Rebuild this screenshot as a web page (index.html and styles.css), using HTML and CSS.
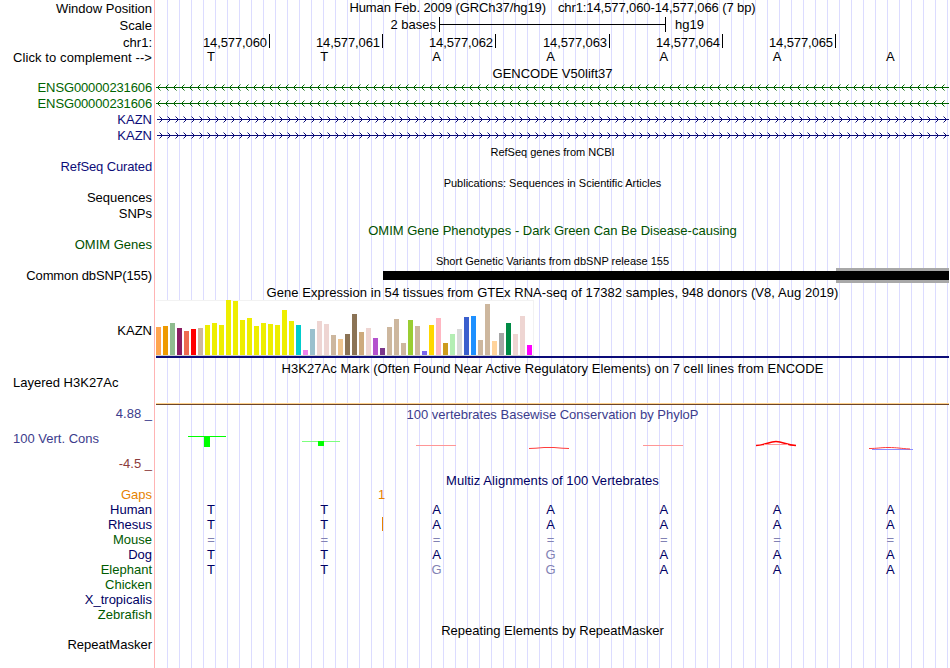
FILE: index.html
```html
<!DOCTYPE html>
<html lang="en">
<head>
  <meta charset="UTF-8">
  <title>chr1:14,577,060-14,577,066</title>
  <link rel="stylesheet" href="styles.css">
</head>
<body>
  <div class="browser">

    <div class="group ruler lower">
      <div class="row"><div class="label">Window Position</div><div class="track position"><span class="assembly">Human Feb. 2009 (GRCh37/hg19)</span><span>chr1:14,577,060-14,577,066 (7 bp)</span></div></div>
      <div class="row scale-row"><div class="label">Scale</div><div class="track scale"><span class="bases">2 bases</span><span class="scale-bar"></span><span>hg19</span></div></div>
      <div class="row coord-row"><div class="label">chr1:</div><div class="track coords"><span>14,577,060</span><span>14,577,061</span><span>14,577,062</span><span>14,577,063</span><span>14,577,064</span><span>14,577,065</span></div></div>
      <div class="row base-row"><div class="label loose">Click to complement --&gt;</div><div class="track seq"><span>T</span><span>T</span><span>A</span><span>A</span><span>A</span><span>A</span><span>A</span></div></div>
    </div>

    <div class="group lower">
      <h2>GENCODE V50lift37</h2>
      <div class="row green"><div class="label tight">ENSG00000231606</div><div class="track"><svg class="gene" width="793" height="16"><defs><pattern id="minus" width="8" height="16" patternUnits="userSpaceOnUse"><path d="M4.5 5.5L1.5 8.5L4.5 11.5"/></pattern></defs><rect width="793" height="16" fill="url(#minus)"/><path d="M0 8.5H793"/></svg></div></div>
      <div class="row green"><div class="label tight">ENSG00000231606</div><div class="track"><svg class="gene" width="793" height="16"><rect width="793" height="16" fill="url(#minus)"/><path d="M0 8.5H793"/></svg></div></div>
      <div class="row blue"><div class="label">KAZN</div><div class="track"><svg class="gene" width="793" height="16"><defs><pattern id="plus" width="8" height="16" patternUnits="userSpaceOnUse"><path d="M3.5 5.5L6.5 8.5L3.5 11.5"/></pattern></defs><rect width="793" height="16" fill="url(#plus)"/><path d="M1 8.5H793"/></svg></div></div>
      <div class="row blue"><div class="label">KAZN</div><div class="track"><svg class="gene" width="793" height="16"><rect width="793" height="16" fill="url(#plus)"/><path d="M1 8.5H793"/></svg></div></div>
    </div>

    <div class="group lower">
      <h2 class="small">RefSeq genes from NCBI</h2>
      <div class="row blue"><div class="label tight">RefSeq Curated</div></div>
    </div>

    <div class="group lower">
      <h2 class="small">Publications: Sequences in Scientific Articles</h2>
      <div class="row"><div class="label">Sequences</div></div>
      <div class="row"><div class="label">SNPs</div></div>
    </div>

    <div class="group lower">
      <h2 class="omim">OMIM Gene Phenotypes - Dark Green Can Be Disease-causing</h2>
      <div class="row omim"><div class="label">OMIM Genes</div></div>
    </div>

    <div class="group lower">
      <h2 class="small">Short Genetic Variants from dbSNP release 155</h2>
      <div class="row"><div class="label tight">Common dbSNP(155)</div><div class="track snps"><span class="snp"></span><span class="snp overlap"></span></div></div>
    </div>

    <div class="group lower">
      <h2 class="wide">Gene Expression in 54 tissues from GTEx RNA-seq of 17382 samples, 948 donors (V8, Aug 2019)</h2>
      <div class="row gtex-row"><div class="label">KAZN</div><div class="track gtex"><div class="bars" id="bars"></div></div></div>
    </div>

    <div class="group">
      <h2 class="wide">H3K27Ac Mark (Often Found Near Active Regulatory Elements) on 7 cell lines from ENCODE</h2>
      <div class="row h3k-row"><div class="label left">Layered H3K27Ac</div><div class="track h3k"></div></div>
    </div>

    <div class="row cons-row">
      <div class="label cons-label"><span class="max">4.88 _</span><span class="name">100 Vert. Cons</span><span class="min">-4.5 _</span></div>
      <div class="track cons">
        <h2>100 vertebrates Basewise Conservation by PhyloP</h2>
        <svg class="wiggle" width="793" height="49">
          <path class="pos" d="M32 13.5H70"/>
          <rect class="pos-box" x="48" y="13" width="6" height="11"/>
          <path class="pos thin" d="M146 18.5H184"/>
          <rect class="pos-box" x="162" y="18" width="6" height="5"/>
          <path class="neg faint" d="M260 22.5H300M487 22.5H527"/>
          <path class="neg" d="M373 25.5L380 25.2L388 24.5H398L406 25.2L413 25.5"/>
          <path class="neg strong" d="M600 22.5C610 22 613 18.5 620 18.5C627 18.5 630 22 640 22.5"/>
          <path class="neg faint" d="M608 21.5H632"/>
          <path class="under" d="M716 26.5H757"/>
          <path class="neg" d="M713 25.5C722 25.5 724 24.5 732 24.5C742 24.5 744 25.5 754 26"/>
        </svg>
      </div>
    </div>

    <div class="group multiz">
      <h2 class="wide">Multiz Alignments of 100 Vertebrates</h2>
      <div class="row gaps"><div class="label">Gaps</div><div class="track gap-count">1</div></div>
      <div class="row"><div class="label">Human</div><div class="track seq"><span>T</span><span>T</span><span>A</span><span>A</span><span>A</span><span>A</span><span>A</span></div></div>
      <div class="row"><div class="label">Rhesus</div><div class="track seq insert"><span>T</span><span>T</span><span>A</span><span>A</span><span>A</span><span>A</span><span>A</span></div></div>
      <div class="row alt"><div class="label">Mouse</div><div class="track seq gap"><span>=</span><span>=</span><span>=</span><span>=</span><span>=</span><span>=</span><span>=</span></div></div>
      <div class="row"><div class="label">Dog</div><div class="track seq"><span>T</span><span>T</span><span>A</span><span class="diff">G</span><span>A</span><span>A</span><span>A</span></div></div>
      <div class="row alt"><div class="label">Elephant</div><div class="track seq"><span>T</span><span>T</span><span class="diff">G</span><span class="diff">G</span><span>A</span><span>A</span><span>A</span></div></div>
      <div class="row alt"><div class="label">Chicken</div></div>
      <div class="row"><div class="label">X_tropicalis</div></div>
      <div class="row alt"><div class="label">Zebrafish</div></div>
    </div>

    <div class="group">
      <h2>Repeating Elements by RepeatMasker</h2>
      <div class="row"><div class="label">RepeatMasker</div></div>
    </div>

  </div>

  <script>
    // median expression per tissue: [bar height, tissue color]
    const tissues = [
      [28, '#ffa54f'], [29, '#ee9a00'], [32, '#8fbc8f'], [27, '#8b1c62'], [24, '#ee6a50'], [26, '#ff0000'],
      [27, '#cdb79e'], [30, '#eeee00'], [32, '#eeee00'], [30, '#eeee00'], [55, '#eeee00'], [54, '#eeee00'],
      [35, '#eeee00'], [37, '#eeee00'], [29, '#eeee00'], [32, '#eeee00'], [31, '#eeee00'], [30, '#eeee00'],
      [45, '#eeee00'], [34, '#eeee00'], [30, '#00cdcd'], [5, '#ee82ee'], [26, '#9ac0cd'], [34, '#eed5d2'],
      [31, '#eed5d2'], [20, '#cdb79e'], [16, '#eec591'], [21, '#8b7355'], [41, '#8b7355'], [23, '#cdaa7d'],
      [27, '#eed5d2'], [17, '#b452cd'], [7, '#7a378b'], [28, '#cdb79e'], [36, '#cdb79e'], [12, '#cdb79e'],
      [35, '#9acd32'], [29, '#cdb79e'], [4, '#7a67ee'], [30, '#ffd700'], [37, '#ffb6c1'], [12, '#cd9b1d'],
      [21, '#b4eeb4'], [26, '#d9d9d9'], [38, '#3a5fcd'], [39, '#1e90ff'], [15, '#cdb79e'], [51, '#cdb79e'],
      [14, '#ffd39b'], [22, '#a6a6a6'], [32, '#008b45'], [21, '#eed5d2'], [39, '#eed5d2'], [10, '#ff00ff']
    ];
    const bars = document.getElementById('bars');
    tissues.forEach(([height, color]) => {
      const bar = document.createElement('span');
      bar.style.height = height + 'px';
      bar.style.background = color;
      bars.appendChild(bar);
    });
  </script>
</body>
</html>
```
FILE: styles.css
```css
body {
  margin: 0;
  background: #fff;
  font-family: "Liberation Sans", Arial, sans-serif;
  font-size: 13px;
  color: #000;
}
.browser {
  width: 949px;
  height: 668px;
  overflow: hidden;
  /* red edge of the label column, then a guide line every 12px */
  background:
    linear-gradient(#ffb4b4, #ffb4b4) 154px 0 / 1px 100% no-repeat,
    linear-gradient(#fff, #fff) 0 0 / 156px 100% no-repeat,
    repeating-linear-gradient(to right, transparent 0 11px, #dcdcff 11px 12px) 156px 0;
}
h2 {
  margin: 0 0 0 156px;
  height: 15px;
  padding-top: 1px;
  box-sizing: border-box;
  line-height: 15px;
  font-size: 13px;
  font-weight: normal;
  text-align: center;
  white-space: nowrap;
}
h2.small {
  font-size: 11px;
}
h2.wide {
  letter-spacing: 0.05px;
}
.row {
  display: flex;
  height: 16px;
  line-height: 16px;
}
.label {
  width: 152px;
  margin-right: 4px;
  flex: none;
  text-align: right;
  white-space: nowrap;
}
.label.tight { letter-spacing: -0.13px; }
.label.loose { letter-spacing: 0.09px; }
.label.left {
  box-sizing: border-box;
  padding-left: 13px;
  text-align: left;
  line-height: 15px;
}
.lower h2 {
  padding-top: 2px;
}
.lower .label {
  padding-top: 1px;
}
.track {
  width: 793px;
  flex: none;
}
.green { color: #006400; }
.blue { color: #0c0c78; }
.omim { color: #005000; }

/* ruler */
.position {
  display: flex;
  justify-content: center;
  gap: 12px;
  letter-spacing: -0.1px;
}
.scale-row, .coord-row {
  height: 17px;
  line-height: 17px;
}
.scale {
  display: flex;
  align-items: center;
}
.bases {
  width: 280px;
  text-align: right;
}
.scale-bar {
  width: 225px;
  height: 15px;
  margin: 0 9px 0 3px;
  border: solid #000;
  border-width: 0 1px;
  background: linear-gradient(#000, #000) 0 7px / 100% 1px no-repeat;
}
.coords {
  display: flex;
  letter-spacing: -0.1px;
}
.coords span {
  box-sizing: border-box;
  width: 113px;
  height: 14px;
  margin-top: 1px;
  padding-right: 2px;
  border-right: 1px solid #000;
  text-align: right;
}
.coords span:nth-child(3n+1) {
  width: 114px;
}
.coords span:last-child {
  width: 113px;
}
.base-row {
  height: 14px;
  line-height: 14px;
}
.seq {
  display: grid;
  grid-template-columns: repeat(7, 113.2px);
  text-align: center;
}
.seq span {
  padding-right: 3px;
}
.seq span:nth-child(3) {
  padding-right: 5px;
}

/* genes */
.gene {
  display: block;
}
.gene path {
  fill: none;
  stroke: currentColor;
  stroke-width: 1;
}

/* variants */
.snps {
  display: flex;
  align-items: center;
}
.snp {
  width: 453px;
  height: 9px;
  margin-left: 227px;
  background: #000;
}
.snp.overlap {
  width: 113px;
  margin-left: 0;
  border: solid #a8a8a8;
  border-width: 3px 0;
}

/* expression */
.gtex-row {
  height: 62px;
  line-height: 64px;
}
.gtex {
  box-sizing: border-box;
  height: 60px;
  padding-top: 2px;
  border-bottom: 2px solid #0c0c78;
}
.bars {
  display: flex;
  align-items: flex-end;
  gap: 2px;
  box-sizing: border-box;
  width: 378px;
  height: 56px;
  border: solid #f2f2f2;
  border-width: 1px 1px 0 0;
  border-bottom: 1px solid #ccc;
  background: #fff;
}
.bars span {
  flex: none;
  width: 5px;
}

.h3k-row {
  height: 30px;
}
.h3k {
  box-sizing: border-box;
  height: 30px;
  border-bottom: 1px solid #6e4628;
  box-shadow: inset 0 -1px #ffd28c;
}

/* conservation */
.cons-row {
  height: 67px;
  color: #3c3c8c;
}
.cons-label {
  display: flex;
  flex-direction: column;
  justify-content: space-between;
}
.cons-label .max {
  height: 15px;
  padding-top: 1px;
}
.cons-label .name {
  padding-left: 13px;
  text-align: left;
}
.cons-label .min {
  color: #8c3c3c;
}
.cons h2 {
  margin: 0;
  height: 18px;
  line-height: 18px;
}
.wiggle {
  display: block;
}
.pos { stroke: #00ff00; fill: none; }
.pos.thin { stroke: #7dff7d; }
.pos-box { fill: #00ff00; }
.neg { stroke: #ff3c3c; fill: none; }
.neg.faint { stroke: #ff9696; }
.neg.strong { stroke: #ff0000; stroke-width: 1.5; }
.under { stroke: #8c8cff; }

/* alignments */
.multiz {
  color: #000064;
}
.multiz .row {
  height: 15px;
  line-height: 15px;
}
.multiz .alt .label {
  color: #005a00;
}
.multiz .gaps {
  color: #e68200;
}
.multiz .seq {
  color: #000064;
}
.gap-count {
  box-sizing: border-box;
  padding-left: 222px;
}
.multiz .insert {
  background: linear-gradient(#e68200, #e68200) 226px 0 / 1px 14px no-repeat;
}
.multiz .gap, .multiz .diff {
  color: #8282b4;
}
```
